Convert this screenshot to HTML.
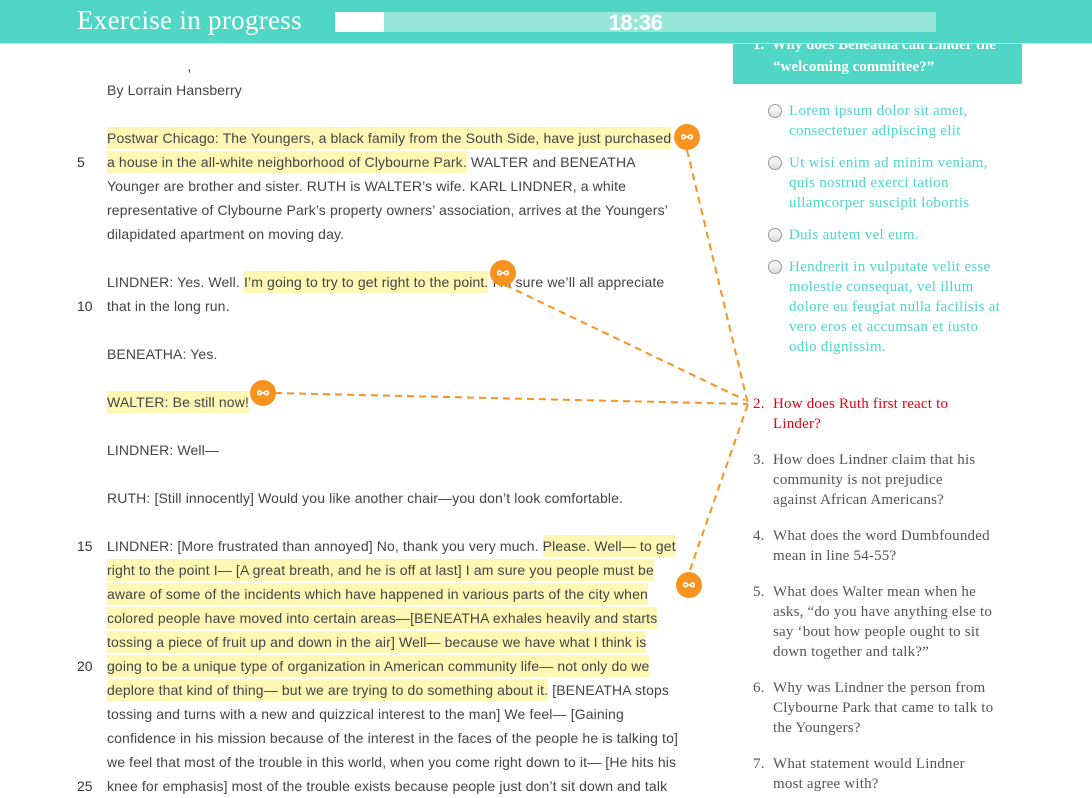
<!DOCTYPE html>
<html><head><meta charset="utf-8"><style>
body{margin:0;width:1092px;height:795px;overflow:hidden;background:#fff;font-family:"Liberation Sans",sans-serif;position:relative}
.hdr{position:absolute;left:0;top:0;width:1092px;height:43px;background:#4fd6c4;border-bottom:1px solid #b8ece5}
.ttl{position:absolute;left:77px;top:5px;color:#fff;font-family:"Liberation Serif",serif;font-size:27px;letter-spacing:0.3px}
.bar{position:absolute;left:335px;top:12px;width:601px;height:20px;background:#97e6da}
.bar i{position:absolute;left:0;top:0;width:49px;height:20px;background:#fff}
.bar b{position:absolute;left:0;width:601px;text-align:center;top:-2px;color:#fff;font-size:22px;font-weight:bold;letter-spacing:-0.5px}
.l{position:absolute;left:107px;white-space:nowrap;font-size:14px;color:#444;height:24px;line-height:24px;letter-spacing:0.13px}
.n{position:absolute;left:77px;font-size:14px;color:#333;line-height:24px}
.h{background:#fff8b5;padding:3px 0}
.ic{position:absolute;width:26px;height:26px;border-radius:50%;background:#f7931e;color:#fff;font-size:14px;text-align:center;line-height:26px;font-weight:bold}
.box{position:absolute;left:733px;top:36px;width:289px;height:48px;background:#4fd6c4;color:#fff;font-family:"Liberation Serif",serif;font-weight:bold;font-size:15px;line-height:22px}
.opt{position:absolute;left:789px;color:#4fd6c4;font-family:"Liberation Serif",serif;font-size:15px;line-height:20px;width:230px;letter-spacing:0.3px}
.rad{position:absolute;left:768px;width:12px;height:12px;border:1px solid #999;border-radius:50%;background:linear-gradient(#fff,#ddd)}
.q{position:absolute;left:753px;font-family:"Liberation Serif",serif;font-size:15px;line-height:20px;color:#555;width:255px;letter-spacing:0.2px}
.q span{position:absolute;left:0}
.q div{margin-left:20px}
</style></head><body>
<div class="l" style="top:54px">&nbsp;&nbsp;&nbsp;&nbsp;&nbsp;&nbsp;&nbsp;&nbsp;&nbsp;&nbsp;&nbsp;&nbsp;&nbsp;&nbsp;&nbsp;&nbsp;&nbsp;&nbsp;&nbsp;&nbsp;,</div>
<div class="l" style="top:78px">By Lorrain Hansberry</div>
<div class="l" style="top:126px"><span class="h">Postwar Chicago: The Youngers, a black family from the South Side, have just purchased</span></div>
<div class="n" style="top:150px">5</div>
<div class="l" style="top:150px"><span class="h">a house in the all-white neighborhood of Clybourne Park.</span> WALTER and BENEATHA</div>
<div class="l" style="top:174px">Younger are brother and sister. RUTH is WALTER’s wife. KARL LINDNER, a white</div>
<div class="l" style="top:198px">representative of Clybourne Park’s property owners’ association, arrives at the Youngers’</div>
<div class="l" style="top:222px">dilapidated apartment on moving day.</div>
<div class="l" style="top:270px">LINDNER: Yes. Well. <span class="h">I’m going to try to get right to the point.</span> I’m sure we’ll all appreciate</div>
<div class="n" style="top:294px">10</div>
<div class="l" style="top:294px">that in the long run.</div>
<div class="l" style="top:342px">BENEATHA: Yes.</div>
<div class="l" style="top:390px"><span class="h">WALTER: Be still now!</span></div>
<div class="l" style="top:438px">LINDNER: Well—</div>
<div class="l" style="top:486px">RUTH: [Still innocently] Would you like another chair—you don’t look comfortable.</div>
<div class="n" style="top:534px">15</div>
<div class="l" style="top:534px">LINDNER: [More frustrated than annoyed] No, thank you very much. <span class="h">Please. Well— to get</span></div>
<div class="l" style="top:558px"><span class="h">right to the point I— [A great breath, and he is off at last] I am sure you people must be</span></div>
<div class="l" style="top:582px"><span class="h">aware of some of the incidents which have happened in various parts of the city when</span></div>
<div class="l" style="top:606px"><span class="h">colored people have moved into certain areas—[BENEATHA exhales heavily and starts</span></div>
<div class="l" style="top:630px"><span class="h">tossing a piece of fruit up and down in the air] Well— because we have what I think is</span></div>
<div class="n" style="top:654px">20</div>
<div class="l" style="top:654px"><span class="h">going to be a unique type of organization in American community life— not only do we</span></div>
<div class="l" style="top:678px"><span class="h">deplore that kind of thing— but we are trying to do something about it.</span> [BENEATHA stops</div>
<div class="l" style="top:702px">tossing and turns with a new and quizzical interest to the man] We feel— [Gaining</div>
<div class="l" style="top:726px">confidence in his mission because of the interest in the faces of the people he is talking to]</div>
<div class="l" style="top:750px">we feel that most of the trouble in this world, when you come right down to it— [He hits his</div>
<div class="n" style="top:774px">25</div>
<div class="l" style="top:774px">knee for emphasis] most of the trouble exists because people just don’t sit down and talk</div>

<svg style="position:absolute;left:0;top:0" width="1092" height="795"><g stroke="#f7931e" stroke-width="2" stroke-dasharray="7,5" fill="none">
<line x1="687" y1="150" x2="748" y2="404"/><line x1="505" y1="285" x2="745" y2="400"/><line x1="275" y1="393" x2="748" y2="404"/><line x1="690" y1="570" x2="748" y2="404"/></g></svg>
<div class="ic" style="left:674px;top:124px">⚯</div>
<div class="ic" style="left:490px;top:260px">⚯</div>
<div class="ic" style="left:250px;top:380px">⚯</div>
<div class="ic" style="left:676px;top:572px">⚯</div>

<div class="box"><div style="position:absolute;left:20px;top:-2px">1.&nbsp; Why does Beneatha call Linder the</div><div style="position:absolute;left:40px;top:20px">“welcoming committee?”</div></div>
<div class="rad" style="top:104px"></div><div class="opt" style="top:101px">Lorem ipsum dolor sit amet,<br>consectetuer adipiscing elit</div>
<div class="rad" style="top:156px"></div><div class="opt" style="top:153px">Ut wisi enim ad minim veniam,<br>quis nostrud exerci tation<br>ullamcorper suscipit lobortis</div>
<div class="rad" style="top:228px"></div><div class="opt" style="top:225px">Duis autem vel eum.</div>
<div class="rad" style="top:260px"></div><div class="opt" style="top:257px">Hendrerit in vulputate velit esse<br>molestie consequat, vel illum<br>dolore eu feugiat nulla facilisis at<br>vero eros et accumsan et iusto<br>odio dignissim.</div>
<div class="q" style="top:394px;color:#e8000f"><span>2.</span><div>How does Ruth first react to<br>Linder?</div></div>
<div class="q" style="top:450px"><span>3.</span><div>How does Lindner claim that his<br>community is not prejudice<br>against African Americans?</div></div>
<div class="q" style="top:526px"><span>4.</span><div>What does the word Dumbfounded<br>mean in line 54-55?</div></div>
<div class="q" style="top:582px"><span>5.</span><div>What does Walter mean when he<br>asks, “do you have anything else to<br>say ‘bout how people ought to sit<br>down together and talk?”</div></div>
<div class="q" style="top:678px"><span>6.</span><div>Why was Lindner the person from<br>Clybourne Park that came to talk to<br>the Youngers?</div></div>
<div class="q" style="top:754px"><span>7.</span><div>What statement would Lindner<br>most agree with?</div></div>

<div class="hdr"><div class="ttl">Exercise in progress</div><div class="bar"><i></i><b>18:36</b></div></div>
</body></html>
